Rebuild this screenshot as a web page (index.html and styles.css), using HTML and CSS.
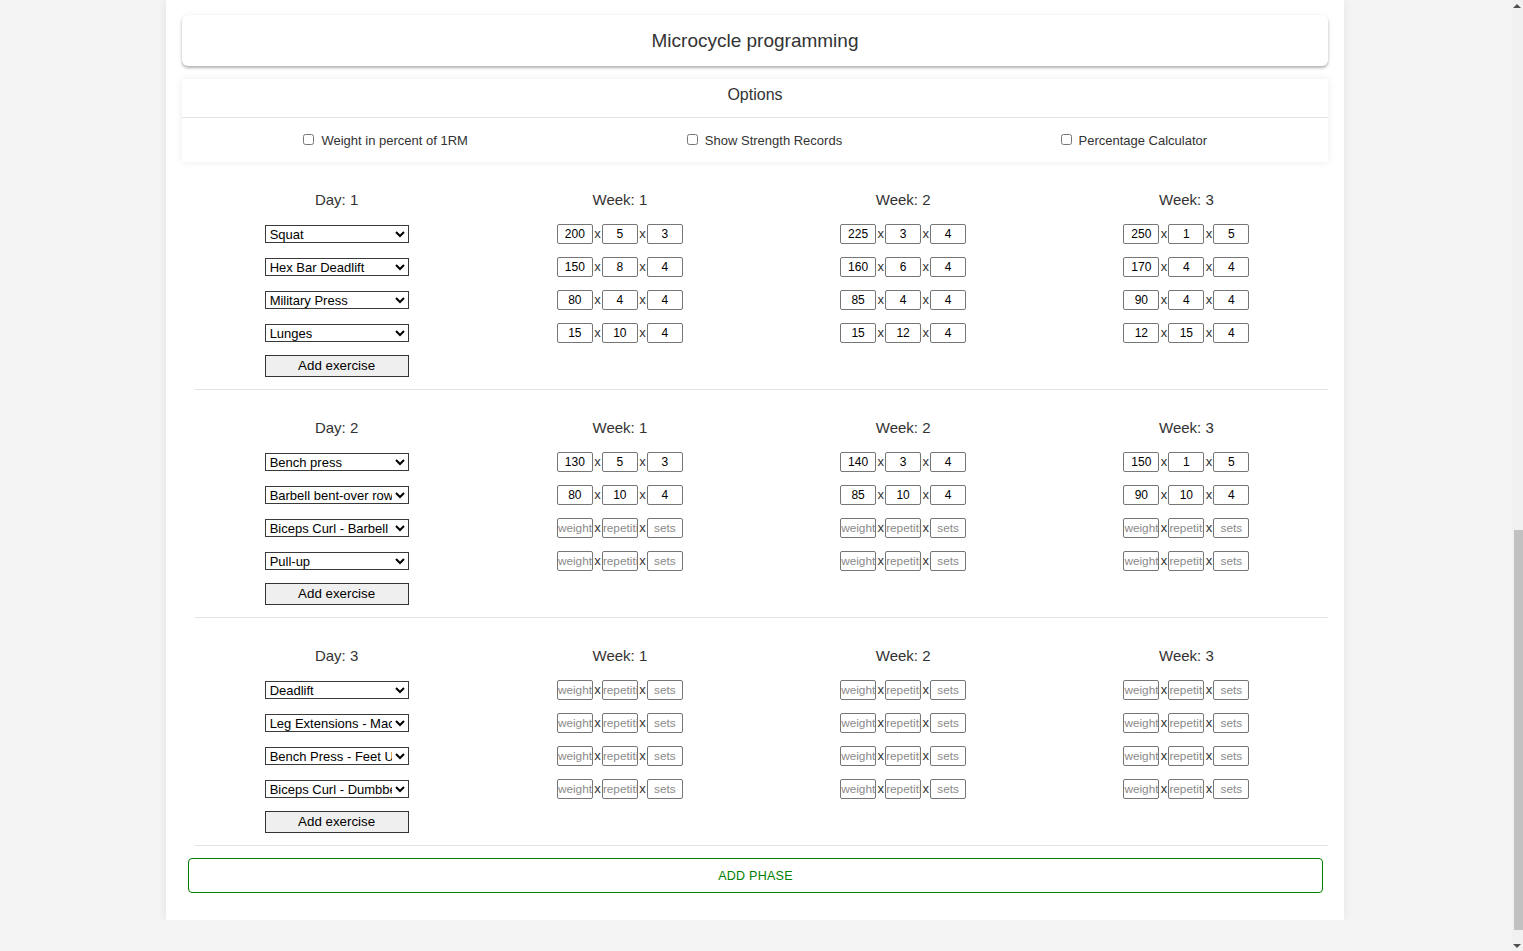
FILE: index.html
```html
<!DOCTYPE html>
<html lang="en">
<head>
<meta charset="utf-8">
<title>Microcycle programming</title>
<link rel="stylesheet" href="styles.css">
</head>
<body>
<div class="page">
  <div class="title-card">Microcycle programming</div>

  <div class="options">
    <div class="options-head">Options</div>
    <div class="options-row">
      <label class="opt"><input type="checkbox">Weight in percent of 1RM</label>
      <label class="opt"><input type="checkbox">Show Strength Records</label>
      <label class="opt"><input type="checkbox">Percentage Calculator</label>
    </div>
  </div>

  <!-- Day 1 -->
  <div class="day">
    <div class="col">
      <h3>Day: 1</h3>
      <div class="row"><select><option>Squat</option></select></div>
      <div class="row"><select><option>Hex Bar Deadlift</option></select></div>
      <div class="row"><select><option>Military Press</option></select></div>
      <div class="row"><select><option>Lunges</option></select></div>
      <div class="row"><button class="add-ex">Add exercise</button></div>
    </div>
    <div class="col">
      <h3>Week: 1</h3>
      <div class="row"><input value="200"><span class="x">x</span><input value="5"><span class="x">x</span><input value="3"></div>
      <div class="row"><input value="150"><span class="x">x</span><input value="8"><span class="x">x</span><input value="4"></div>
      <div class="row"><input value="80"><span class="x">x</span><input value="4"><span class="x">x</span><input value="4"></div>
      <div class="row"><input value="15"><span class="x">x</span><input value="10"><span class="x">x</span><input value="4"></div>
    </div>
    <div class="col">
      <h3>Week: 2</h3>
      <div class="row"><input value="225"><span class="x">x</span><input value="3"><span class="x">x</span><input value="4"></div>
      <div class="row"><input value="160"><span class="x">x</span><input value="6"><span class="x">x</span><input value="4"></div>
      <div class="row"><input value="85"><span class="x">x</span><input value="4"><span class="x">x</span><input value="4"></div>
      <div class="row"><input value="15"><span class="x">x</span><input value="12"><span class="x">x</span><input value="4"></div>
    </div>
    <div class="col">
      <h3>Week: 3</h3>
      <div class="row"><input value="250"><span class="x">x</span><input value="1"><span class="x">x</span><input value="5"></div>
      <div class="row"><input value="170"><span class="x">x</span><input value="4"><span class="x">x</span><input value="4"></div>
      <div class="row"><input value="90"><span class="x">x</span><input value="4"><span class="x">x</span><input value="4"></div>
      <div class="row"><input value="12"><span class="x">x</span><input value="15"><span class="x">x</span><input value="4"></div>
    </div>
  </div>

  <!-- Day 2 -->
  <div class="day">
    <div class="col">
      <h3>Day: 2</h3>
      <div class="row"><select><option>Bench press</option></select></div>
      <div class="row"><select><option>Barbell bent-over row</option></select></div>
      <div class="row"><select><option>Biceps Curl - Barbell</option></select></div>
      <div class="row"><select><option>Pull-up</option></select></div>
      <div class="row"><button class="add-ex">Add exercise</button></div>
    </div>
    <div class="col">
      <h3>Week: 1</h3>
      <div class="row"><input value="130"><span class="x">x</span><input value="5"><span class="x">x</span><input value="3"></div>
      <div class="row"><input value="80"><span class="x">x</span><input value="10"><span class="x">x</span><input value="4"></div>
      <div class="row"><input placeholder="weight"><span class="x">x</span><input placeholder="repetitions"><span class="x">x</span><input placeholder="sets"></div>
      <div class="row"><input placeholder="weight"><span class="x">x</span><input placeholder="repetitions"><span class="x">x</span><input placeholder="sets"></div>
    </div>
    <div class="col">
      <h3>Week: 2</h3>
      <div class="row"><input value="140"><span class="x">x</span><input value="3"><span class="x">x</span><input value="4"></div>
      <div class="row"><input value="85"><span class="x">x</span><input value="10"><span class="x">x</span><input value="4"></div>
      <div class="row"><input placeholder="weight"><span class="x">x</span><input placeholder="repetitions"><span class="x">x</span><input placeholder="sets"></div>
      <div class="row"><input placeholder="weight"><span class="x">x</span><input placeholder="repetitions"><span class="x">x</span><input placeholder="sets"></div>
    </div>
    <div class="col">
      <h3>Week: 3</h3>
      <div class="row"><input value="150"><span class="x">x</span><input value="1"><span class="x">x</span><input value="5"></div>
      <div class="row"><input value="90"><span class="x">x</span><input value="10"><span class="x">x</span><input value="4"></div>
      <div class="row"><input placeholder="weight"><span class="x">x</span><input placeholder="repetitions"><span class="x">x</span><input placeholder="sets"></div>
      <div class="row"><input placeholder="weight"><span class="x">x</span><input placeholder="repetitions"><span class="x">x</span><input placeholder="sets"></div>
    </div>
  </div>

  <!-- Day 3 -->
  <div class="day">
    <div class="col">
      <h3>Day: 3</h3>
      <div class="row"><select><option>Deadlift</option></select></div>
      <div class="row"><select><option>Leg Extensions - Machine</option></select></div>
      <div class="row"><select><option>Bench Press - Feet Up</option></select></div>
      <div class="row"><select><option>Biceps Curl - Dumbbell</option></select></div>
      <div class="row"><button class="add-ex">Add exercise</button></div>
    </div>
    <div class="col">
      <h3>Week: 1</h3>
      <div class="row"><input placeholder="weight"><span class="x">x</span><input placeholder="repetitions"><span class="x">x</span><input placeholder="sets"></div>
      <div class="row"><input placeholder="weight"><span class="x">x</span><input placeholder="repetitions"><span class="x">x</span><input placeholder="sets"></div>
      <div class="row"><input placeholder="weight"><span class="x">x</span><input placeholder="repetitions"><span class="x">x</span><input placeholder="sets"></div>
      <div class="row"><input placeholder="weight"><span class="x">x</span><input placeholder="repetitions"><span class="x">x</span><input placeholder="sets"></div>
    </div>
    <div class="col">
      <h3>Week: 2</h3>
      <div class="row"><input placeholder="weight"><span class="x">x</span><input placeholder="repetitions"><span class="x">x</span><input placeholder="sets"></div>
      <div class="row"><input placeholder="weight"><span class="x">x</span><input placeholder="repetitions"><span class="x">x</span><input placeholder="sets"></div>
      <div class="row"><input placeholder="weight"><span class="x">x</span><input placeholder="repetitions"><span class="x">x</span><input placeholder="sets"></div>
      <div class="row"><input placeholder="weight"><span class="x">x</span><input placeholder="repetitions"><span class="x">x</span><input placeholder="sets"></div>
    </div>
    <div class="col">
      <h3>Week: 3</h3>
      <div class="row"><input placeholder="weight"><span class="x">x</span><input placeholder="repetitions"><span class="x">x</span><input placeholder="sets"></div>
      <div class="row"><input placeholder="weight"><span class="x">x</span><input placeholder="repetitions"><span class="x">x</span><input placeholder="sets"></div>
      <div class="row"><input placeholder="weight"><span class="x">x</span><input placeholder="repetitions"><span class="x">x</span><input placeholder="sets"></div>
      <div class="row"><input placeholder="weight"><span class="x">x</span><input placeholder="repetitions"><span class="x">x</span><input placeholder="sets"></div>
    </div>
  </div>

  <div class="phase-wrap"><button class="add-phase">ADD PHASE</button></div>
</div>

<div class="scrollbar" aria-hidden="true">
  <span class="sb-up"></span>
  <span class="sb-thumb"></span>
  <span class="sb-down"></span>
</div>
</body>
</html>
```

FILE: styles.css
```css
body {
  margin: 0;
  padding-right: 13px;
  background: #f4f4f4;
  font-family: "Liberation Sans", Arial, sans-serif;
  color: #333;
}

.page {
  width: 1146px;
  margin: 0 auto;
  padding: 15px 16px 27px;
  background: #fff;
  box-shadow: 0 0 10px rgba(0, 0, 0, 0.07);
}

.title-card {
  height: 51px;
  border-radius: 6px;
  background: #fff;
  box-shadow: 0 2px 3px rgba(0, 0, 0, 0.28), 0 0 6px rgba(0, 0, 0, 0.05);
  display: flex;
  align-items: center;
  justify-content: center;
  font-size: 19px;
  color: #333;
}

.options {
  margin-top: 13px;
  background: #fff;
  box-shadow: 0 0 8px rgba(0, 0, 0, 0.08);
}

.options-head {
  padding: 6px 0 12px;
  line-height: 20px;
  font-size: 16px;
  text-align: center;
  border-bottom: 1px solid #e3e3e3;
}

.options-row {
  display: grid;
  grid-template-columns: 407fr 350fr 388fr;
  height: 44px;
  align-items: center;
  font-size: 13px;
}

.opt {
  display: flex;
  justify-content: center;
  align-items: center;
}

.opt input {
  width: 11px;
  height: 11px;
  margin: -2px 7px 0 0;
}

.day {
  margin-left: 13px;
  padding: 27px 0 7px;
  border-bottom: 1px solid #e3e3e3;
  display: grid;
  grid-template-columns: repeat(4, 1fr);
  position: relative;
}

.col {
  display: flex;
  flex-direction: column;
  align-items: center;
}

.col h3 {
  margin: 1px 0 7px;
  font-size: 15px;
  font-weight: normal;
  line-height: 20px;
  color: #333;
}

.row {
  height: 33px;
  display: flex;
  align-items: center;
}

select {
  width: 144px;
  height: 18px;
  box-sizing: border-box;
  font-family: "Liberation Sans", Arial, sans-serif;
  font-size: 13px;
  color: #000;
  background: #fff;
  border: 1px solid #3a3a3a;
  border-radius: 0;
  padding: 0;
}

.add-ex {
  width: 144px;
  height: 22px;
  box-sizing: border-box;
  background: #efefef;
  border: 1px solid #333;
  border-radius: 0;
  font-family: "Liberation Sans", Arial, sans-serif;
  font-size: 13.33px;
  color: #000;
  padding: 0;
}

.row input {
  width: 36px;
  height: 20px;
  box-sizing: border-box;
  border: 1px solid #767676;
  border-radius: 2px;
  padding: 0;
  margin: 0;
  font-family: "Liberation Sans", Arial, sans-serif;
  font-size: 12px;
  color: #000;
  text-align: center;
  background: #fff;
}

.row input::placeholder {
  color: #8a8a8a;
  font-size: 11.8px;
}

.x {
  width: 9px;
  text-align: center;
  font-size: 13px;
  color: #333;
}

.phase-wrap {
  padding: 12px 5px 0 6px;
}

.add-phase {
  display: block;
  width: 100%;
  height: 35px;
  background: #fff;
  border: 1px solid #008000;
  border-radius: 4px;
  color: #008000;
  font-family: "Liberation Sans", Arial, sans-serif;
  font-size: 12.5px;
  letter-spacing: 0.02em;
}

/* imitation of the browser's scrollbar (page is scrolled to its bottom) */
.scrollbar {
  position: fixed;
  top: 0;
  right: 0;
  width: 11px;
  height: 100%;
  background: #f1f1f1;
}

.sb-thumb {
  position: absolute;
  top: 530px;
  left: 2px;
  right: 0;
  height: 400px;
  background: #c1c1c1;
}

.sb-up,
.sb-down {
  position: absolute;
  right: 2px;
  width: 0;
  height: 0;
  border-left: 4px solid transparent;
  border-right: 4px solid transparent;
}

.sb-up {
  top: 4px;
  border-bottom: 4px solid #505050;
}

.sb-down {
  bottom: 3px;
  border-top: 4px solid #505050;
}
```
